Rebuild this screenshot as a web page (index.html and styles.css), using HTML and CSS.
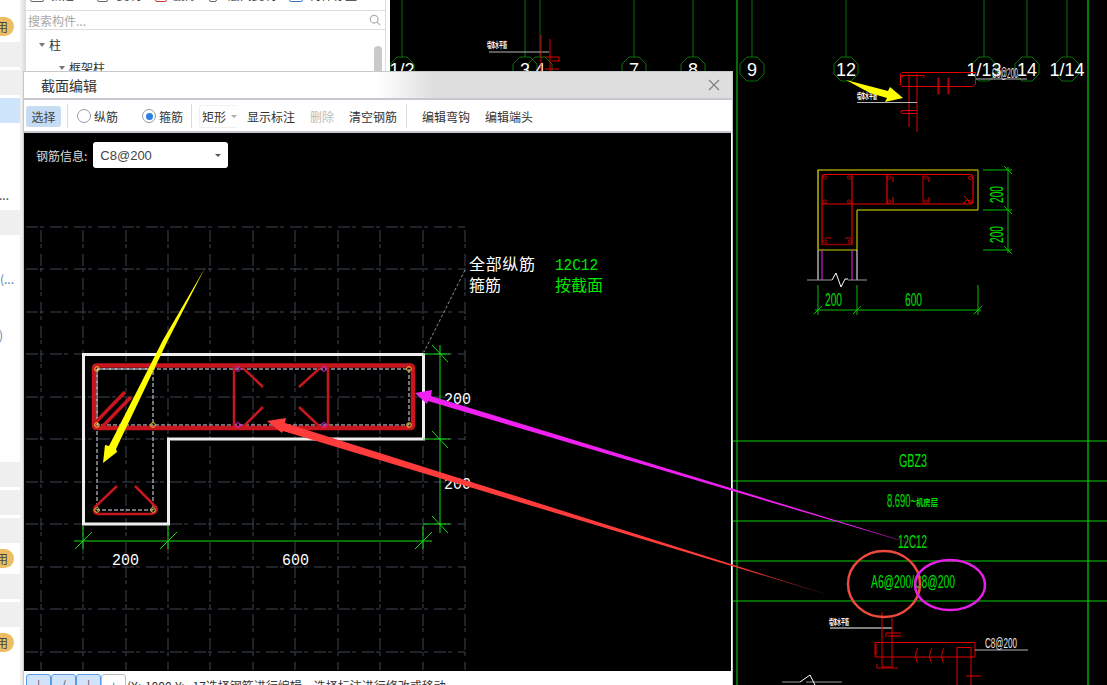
FILE: index.html
```html
<!DOCTYPE html>
<html lang="zh">
<head>
<meta charset="utf-8">
<title>截面编辑</title>
<link rel="stylesheet" href="styles.css">
</head>
<body>
<div class="app">
  <aside class="rail">
    <div class="row"><span class="badge">启用</span></div>
    <div class="row grey"></div>
    <div class="row grey"></div>
    <div class="row active"></div>
    <div class="row"></div>
    <div class="row"></div>
    <div class="row"><span class="cut">...</span></div>
    <div class="row grey"></div>
    <div class="row"></div>
    <div class="row"><span class="cut blue">(...</span></div>
    <div class="row"></div>
    <div class="row"><span class="cut blue far">)</span></div>
    <div class="row"></div>
    <div class="row"></div>
    <div class="row"></div>
    <div class="row"></div>
    <div class="row grey"></div>
    <div class="row grey"></div>
    <div class="row grey"></div>
    <div class="row"><span class="badge">启用</span></div>
    <div class="row grey"></div>
    <div class="row grey"></div>
    <div class="row"><span class="badge">启用</span></div>
    <div class="row"></div>
  </aside>
  <div class="gutter"></div>
  <section class="panel">
    <div class="ptools">
      <div class="ptools-row">
        <span class="pitem"><i class="picon"></i>新建</span>
        <span class="pitem"><i class="picon small"></i>复制</span>
        <span class="pitem"><i class="picon reddot"></i>删除</span>
        <span class="pitem"><i class="picon tiny"></i>层间复制</span>
        <span class="pitem"><i class="picon bluedot"></i>构件存盘</span>
      </div>
    </div>
    <div class="search">
      <span>搜索构件...</span>
      <svg class="mag" viewBox="0 0 14 14"><circle cx="6" cy="6" r="4.5"/><path d="M9.5 9.5L13 13"/></svg>
    </div>
    <div class="tree">
      <div class="node"><i class="tri"></i>柱</div>
      <div class="node sub"><i class="tri"></i>框架柱</div>
      <div class="thumb"></div>
    </div>
  </section>
  <div class="edge"></div>
  <main class="cad">
    <svg class="fill" viewBox="390 0 717 685">
      <defs><polygon id="oct" points="-5,-12 5,-12 12,-5 12,5 5,12 -5,12 -12,5 -12,-5"/></defs>
      <path class="axis" d="M402 0V57M525 0V57M540 0V57M634 0V57M693 0V57M752 0V57M846 0V57M984 0V57M1027 0V57M1067 0V57"/>
      <g class="axis">
        <use href="#oct" x="402" y="69"/><use href="#oct" x="525" y="69"/><use href="#oct" x="540" y="69"/>
        <use href="#oct" x="634" y="69"/><use href="#oct" x="693" y="69"/><use href="#oct" x="752" y="69"/>
        <use href="#oct" x="846" y="69"/><use href="#oct" x="984" y="69"/><use href="#oct" x="1027" y="69"/><use href="#oct" x="1067" y="69"/>
      </g>
      <g class="axis-label">
        <text x="402" y="76">1/2</text><text x="525" y="76">3</text><text x="540" y="76">4</text>
        <text x="634" y="76">7</text><text x="693" y="76">8</text><text x="752" y="76">9</text><text x="846" y="76">12</text>
        <text x="984" y="76">1/13</text><text x="1027" y="76">14</text><text x="1067" y="76">1/14</text>
      </g>
      <path class="frame-dark" d="M737 0V685"/>
      <path class="frame" d="M1088 0V685M733 441H1107M733 481H1107M733 521H1107M733 561H1107M733 601H1107"/>

      <text class="tiny" x="487" y="48" textLength="20" lengthAdjust="spacingAndGlyphs">墙体水平筋</text>
      <path class="grey-line" d="M489 52H549"/>
      <path class="red" d="M541 35V72M550 39V72M545 57H559V61H552M545 69H559"/>

      <path class="red" d="M902 72.500H975.500V84L973 86.500H902L900.500 85V74ZM909 74V127M917 74V132M902 78V75.500H924V78M902 112V110.500H916M902 110.500Q899 112 902 113.500H916M937 78Q939 78 939 81V91Q939 94 937 94M940 78Q938 78 938 81V91Q938 94 940 94M947 78Q949 78 949 81V91Q949 94 947 94M950 78Q948 78 948 81V91Q948 94 950 94"/>
      <path class="grey-line" d="M857 102.500H917M976 79H1027"/>
      <text class="tiny" x="857" y="99" textLength="20" lengthAdjust="spacingAndGlyphs">墙体水平筋</text>
      <text class="cadtext" x="992" y="78" textLength="26" lengthAdjust="spacingAndGlyphs">C8@200</text>

      <path class="yellow-line" d="M818 250V170H978"/>
      <path class="olive" d="M978 170V210M818 250H857"/>
      <path class="yellow-line thin" d="M978 210H857V250"/>
      <path class="red2" d="M825 174.500H970Q973 174.500 973 178V200Q973 204 970 204H822V178Q822 174.500 825 174.500ZM822 204V245M852 174V245M887 174V204"/>
      <path class="darkred" d="M923 174V204M822 244.500H852"/>
      <path class="red" d="M893 177V182M893 197V203M929 177V182M929 197V203M963 204L968 199M964 196L972 204M825 238H831M845 238H851"/>
      <g class="bars">
        <circle cx="825" cy="177.500" r="1.600"/><circle cx="849" cy="177.500" r="1.600"/><circle cx="889" cy="177.500" r="1.600"/><circle cx="926" cy="177.500" r="1.600"/><circle cx="970" cy="178" r="1.600"/>
        <circle cx="825" cy="201.500" r="1.600"/><circle cx="849" cy="201.500" r="1.600"/><circle cx="889" cy="201.500" r="1.600"/><circle cx="926" cy="201.500" r="1.600"/><circle cx="970" cy="201.500" r="1.600"/>
        <circle cx="825" cy="241.500" r="1.600"/><circle cx="850" cy="241.500" r="1.600"/>
      </g>
      <path class="white-line" d="M818 250V280M857 250V280"/>
      <path class="magenta" d="M822 250V280M852 250V280"/>
      <path class="break" d="M807 280H832M848 280H867"/>
      <path class="white-line" d="M832 280L836 273L841 287L845 279H848"/>
      <path class="dim" d="M983 170H1012M983 210H1012M983 250H1012M1008 167V253M1004 166L1012 174M1004 206L1012 214M1004 246L1012 254"/>
      <path class="dim" d="M818 285V315M857 285V315M978 285V315M815 310H981M814 314L822 306M853 314L861 306M974 314L982 306"/>
      <g class="cadgreen">
        <text x="825" y="306" textLength="17" lengthAdjust="spacingAndGlyphs">200</text>
        <text x="905" y="306" textLength="17" lengthAdjust="spacingAndGlyphs">600</text>
        <text transform="translate(1003 203) rotate(-90)" textLength="17" lengthAdjust="spacingAndGlyphs">200</text>
        <text transform="translate(1003 243) rotate(-90)" textLength="17" lengthAdjust="spacingAndGlyphs">200</text>
        <text x="899" y="467" textLength="28" lengthAdjust="spacingAndGlyphs">GBZ3</text>
        <text x="887" y="507" textLength="29" lengthAdjust="spacingAndGlyphs">8.690~</text>
        <text class="tinygreen" x="916" y="506" textLength="22" lengthAdjust="spacingAndGlyphs">机房层</text>
        <text x="898" y="548" textLength="29" lengthAdjust="spacingAndGlyphs">12C12</text>
        <text x="871" y="588" textLength="84" lengthAdjust="spacingAndGlyphs">A6@200/C8@200</text>
      </g>

      <text class="tiny" x="829" y="625" textLength="20" lengthAdjust="spacingAndGlyphs">墙体水平筋</text>
      <path class="white-line" d="M830 628H892"/>
      <path class="red" d="M882 612V667H892V618M875 642.500H975V657H875ZM957 685V647.500H971V685M876 644V655M886 633H901M886 633V637M888 636H901M877 668H898M877 668V664M918 648C915 652 915 660 918 663M932 648C929 652 929 660 932 663M944 648C941 652 941 660 944 663M966 676H981"/>
      <path class="grey-line" d="M975 650H1028"/>
      <text class="cadtext" x="985" y="648" textLength="32" lengthAdjust="spacingAndGlyphs">C8@200</text>
      <path class="break" d="M782 682H800M806 682H842"/>
      <path class="white-line" d="M800 682L810 675L815 685"/>
    </svg>
  </main>
</div>

<div class="dialog">
  <header class="titlebar">
    <span class="title">截面编辑</span>
    <svg class="close" viewBox="0 0 12 12"><path d="M1 1L11 11M11 1L1 11"/></svg>
  </header>
  <div class="toolbar">
    <button class="tool selected">选择</button>
    <span class="sep m6"></span>
    <label class="radio m9"><i class="dot"></i>纵筋</label>
    <label class="radio m24"><i class="dot on"></i>箍筋</label>
    <span class="sep m8"></span>
    <span class="combo m7">矩形<i class="caret"></i></span>
    <span class="tool-text m9">显示标注</span>
    <span class="tool-text m15 disabled">删除</span>
    <span class="tool-text m15">清空钢筋</span>
    <span class="sep m9"></span>
    <span class="tool-text m15">编辑弯钩</span>
    <span class="tool-text m15">编辑端头</span>
  </div>
  <div class="canvas">
    <div class="info">
      <span class="info-label">钢筋信息:</span>
      <span class="select">C8@200<i class="caret dark"></i></span>
    </div>
    <svg class="fill" viewBox="24 133 707 538">
      <path class="gridline" d="M26 227H465M26 269H465M26 312H465M26 354H465M26 397H465M26 439H465M26 482H465M26 524H465M26 567H465M26 609H465M26 652H465"/>
      <path class="gridline" d="M41 230V670M83 230V670M126 230V670M168 230V670M210 230V670M253 230V670M295 230V670M338 230V670M380 230V670M423 230V670M465 230V670"/>
      <path class="leader" d="M465 270L424 352"/>

      <path class="dashed" d="M97 369H409V425H97ZM97 425V510H153V369H97V425"/>
      <path class="concrete" d="M83.500 354.500H423.500V439H168.500V524H83.500Z"/>
      <path class="stirrup" d="M97 365.500H410Q413 365.500 413 369V425Q413 428 410 428H97Q94 428 94 425V369Q94 365.500 97 365.500Z"/>
      <path class="stirrup mid" d="M234 366V428M328 366V428"/>
      <path class="stirrup mid" d="M243 368L263 387M320 368L299 387M243 427L263 407M320 427L299 407M117 486L95 507Q92 513 98 514H152Q158 513 156 507L135 486"/>
      <path class="stirrup mid wide" d="M93 425L125 392M102 427L131 397"/>
      <g class="pin-y">
        <circle cx="97" cy="369" r="2.300"/><circle cx="409" cy="369" r="2.300"/><circle cx="97" cy="425" r="2.300"/><circle cx="153" cy="425" r="2.300"/><circle cx="409" cy="425" r="2.300"/><circle cx="97" cy="510" r="2.300"/><circle cx="153" cy="510" r="2.300"/>
      </g>
      <g class="pin-m">
        <circle cx="238" cy="369" r="2.300"/><circle cx="324" cy="369" r="2.300"/><circle cx="238" cy="425" r="2.300"/><circle cx="324" cy="425" r="2.300"/>
      </g>
      <path class="dim2" d="M440 345V533M423 354H450M423 439H450M423 524H450M432 345L448 362M432 431L448 448M432 516L448 533"/>
      <path class="dim2" d="M83 526V549M168 526V549M423 526V549M74 541H432M75 549L92 532M160 549L177 532M415 549L432 532"/>
      <g class="cadwhite">
        <text x="112" y="565" textLength="27" lengthAdjust="spacingAndGlyphs">200</text>
        <text x="282" y="565" textLength="27" lengthAdjust="spacingAndGlyphs">600</text>
        <text x="444" y="404" textLength="27" lengthAdjust="spacingAndGlyphs">200</text>
        <text x="444" y="489" textLength="27" lengthAdjust="spacingAndGlyphs">200</text>
      </g>
      <g class="legend">
        <text x="469" y="270" textLength="66" lengthAdjust="spacing">全部纵筋</text>
        <text x="469" y="291">箍筋</text>
        <text class="g mono" x="555" y="270" textLength="43" lengthAdjust="spacingAndGlyphs">12C12</text>
        <text class="g" x="555" y="291">按截面</text>
      </g>
      <polygon class="arrow-y" points="205,268 168,340 116,449 117,452 103,463 105,445 109,446 163,340"/>
    </svg>
  </div>
  <footer class="statusbar">
    <div class="tabs">
      <span class="tab on">|</span><span class="tab on">/</span><span class="tab on">|</span><span class="tab">+</span>
    </div>
    <span class="status">(X: 1000 Y: -17选择钢筋进行编辑，选择标注进行修改或移动</span>
  </footer>
</div>

<svg class="overlay" viewBox="0 0 1107 685">
  <defs>
    <linearGradient id="fadeR" gradientUnits="userSpaceOnUse" x1="267" y1="421" x2="835" y2="597">
      <stop offset="0.8" stop-color="#ff3b3b"/><stop offset="1" stop-color="#7a1a1a"/>
    </linearGradient>
    <linearGradient id="fadeM" gradientUnits="userSpaceOnUse" x1="415" y1="393" x2="939" y2="552">
      <stop offset="0.85" stop-color="#f021f0"/><stop offset="1" stop-color="#6a106a"/>
    </linearGradient>
  </defs>
  <polygon fill="url(#fadeR)" points="267,421 286,418 285,423 835,597 283,431 282,433"/>
  <polygon fill="url(#fadeM)" points="415,393 432,390 431,396 939,552 428,401 427,404"/>
  <polygon class="arrow-y" points="846,80 888,91 890,87 903,98 885,102 887,98 870,93"/>
  <ellipse class="ring-r" cx="884" cy="584" rx="36" ry="33"/>
  <ellipse class="ring-m" cx="950" cy="585" rx="35" ry="25"/>
</svg>
</body>
</html>
```

FILE: styles.css
```css
* { box-sizing: border-box; }
html, body { margin: 0; padding: 0; }
body {
  position: relative;
  width: 1107px;
  height: 685px;
  overflow: hidden;
  background: #000;
  font-family: "Noto Sans CJK SC", "Liberation Sans", sans-serif;
  font-size: 12px;
  color: #333;
}
i { font-style: normal; display: inline-block; }

.app { display: flex; height: 685px; }

/* left rail */
.rail { width: 20px; padding-top: 11px; background: #fff; overflow: hidden; flex: none; }
.row {
  display: flex;
  justify-content: flex-end;
  align-items: center;
  height: 28px;
  padding-right: 6px;
  border-top: 3px solid #fff;
  background: #fff;
  white-space: nowrap;
}
.row.grey { background: #efefef; }
.row.active { background: #cfe5fb; }
.badge {
  flex: none;
  height: 19px;
  padding: 0 6px 0 8px;
  border-radius: 10px;
  background: #edbd62;
  line-height: 19px;
  color: #444;
}
.cut { flex: none; color: #444; margin-right: 5px; }
.cut.blue { color: #4a7fb0; margin-right: 0; }
.cut.far { margin-right: 11px; }

.gutter { width: 5px; flex: none; background: linear-gradient(90deg, #f4f4f4, #dcdcdc); }

/* component panel */
.panel { width: 361px; flex: none; background: #fff; border-left: 1px solid #ddd; border-right: 1px solid #ddd; }
.ptools { height: 11px; overflow: hidden; border-bottom: 1px solid #ddd; }
.ptools-row {
  display: grid;
  grid-template-columns: 67px 58px 54px 80px 86px;
  margin: -13px 0 0 4px;
  height: 16px;
  line-height: 16px;
  font-size: 12px;
}
.pitem { display: flex; align-items: center; gap: 6px; white-space: nowrap; }
.picon { width: 14px; height: 14px; border: 1px solid #666; border-radius: 2px; flex: none; }
.picon.small { width: 11px; margin-right: 3px; }
.picon.reddot { width: 12px; border-color: #d33; }
.picon.tiny { width: 8px; margin-right: 5px; }
.picon.bluedot { width: 14px; border-color: #3a78c8; }

.search {
  display: flex;
  align-items: center;
  justify-content: space-between;
  height: 19px;
  padding: 0 4px 0 2px;
  border-bottom: 1px solid #ddd;
  color: #a8a8a8;
  font-size: 12px;
}
.mag { width: 12px; height: 12px; fill: none; stroke: #b0b0b0; stroke-width: 1.5; }
.mag path { stroke: #b0b0b0; }

.tree { position: relative; height: 655px; background: #fff; color: #333; padding-top: 3px; }
.node { display: flex; align-items: center; height: 23px; padding-left: 13px; gap: 3px; }
.node.sub { padding-left: 33px; }
.tri { width: 0; height: 0; margin-right: 1px; border: 3.5px solid transparent; border-top: 4px solid #777; border-bottom: 0; }
.thumb { position: absolute; top: 16px; right: 3px; width: 8px; height: 60px; border-radius: 4px; background: #c9c9c9; }

.edge { width: 4px; flex: none; background: #fff; }

.cad { flex: 1; min-width: 0; height: 685px; }
.fill { display: block; width: 100%; height: 100%; }

/* CAD strokes */
svg path, svg use { fill: none; }
.axis { stroke: #0a6e0a; stroke-width: 1; fill: none; }
.axis use { stroke: #0a6e0a; }
.axis-label text { fill: #fff; font: 18px "Liberation Sans", sans-serif; text-anchor: middle; }
.frame { stroke: #00d400; stroke-width: 1.2; }
.frame-dark { stroke: #078c07; stroke-width: 1.5; }
.red { stroke: #e00000; stroke-width: 1; }
.red2 { stroke: #ee0000; stroke-width: 1.2; }
.darkred { stroke: #8e0000; stroke-width: 1.5; }
.grey-line { stroke: #b5b5b5; stroke-width: 1; }
.white-line { stroke: #fff; stroke-width: 1; }
.magenta { stroke: #f020f0; stroke-width: 1; }
.break { stroke: #9a9a9a; stroke-width: 1.2; }
.yellow-line { stroke: #e6e600; stroke-width: 1.2; }
.yellow-line.thin { stroke-width: 1; }
.olive { stroke: #8a8a00; stroke-width: 1.5; }
.dim { stroke: #00c000; stroke-width: 1; }
.bars { fill: none; stroke: #e00000; stroke-width: 0.8; }
.tiny { fill: #fff; font: 700 8px "Noto Sans CJK SC", sans-serif; }
.cadtext { fill: #e8e8e8; font: 15px "Liberation Sans", sans-serif; }
.cadgreen text { fill: #00e000; font: 18px "Liberation Sans", sans-serif; }
.cadgreen text.tinygreen { font: 700 9px "Noto Sans CJK SC", sans-serif; }

/* dialog window */
.dialog {
  position: absolute;
  left: 23px;
  top: 71px;
  width: 710px;
  height: 614px;
  display: flex;
  flex-direction: column;
  border: 1px solid #c5c8cc;
  border-bottom: 0;
  background: #fff;
}
.titlebar {
  display: flex;
  align-items: center;
  justify-content: space-between;
  flex: none;
  height: 28px;
  padding: 0 12px 0 17px;
  border-bottom: 2px solid #c5c8cc;
  background: linear-gradient(90deg, #fff 50%, #dedede 58%);
}
.title { font-size: 14px; color: #333; }
.close { width: 12px; height: 12px; stroke: #808080; stroke-width: 1.2; }

.toolbar {
  display: flex;
  align-items: center;
  flex: none;
  height: 33px;
  padding: 1px 0 0 2px;
  margin-right: 1px;
  border-bottom: 2px solid #c5c8cc;
  background: #fff;
  white-space: nowrap;
}
.m6 { margin-left: 6px; }
.m7 { margin-left: 7px; }
.m8 { margin-left: 8px; }
.m9 { margin-left: 9px; }
.m14 { margin-left: 14px; }
.m15 { margin-left: 15px; }
.m24 { margin-left: 24px; }
.tool {
  width: 35px;
  height: 21px;
  padding: 0;
  border: 0;
  border-radius: 3px;
  background: #c5dcf2;
  color: #444;
  font: inherit;
}
.sep { width: 1px; height: 24px; background: #dcdcdc; flex: none; }
.radio { display: flex; align-items: center; gap: 3px; color: #333; }
.dot { position: relative; width: 14px; height: 14px; border: 1px solid #999; border-radius: 50%; background: #fff; }
.dot.on::after {
  content: "";
  position: absolute;
  left: 2.500px;
  top: 2.500px;
  width: 7px;
  height: 7px;
  border-radius: 50%;
  background: #2d7fe6;
}
.combo { display: flex; align-items: center; width: 39px; height: 23px; padding-left: 2px; border: 1px solid #f0f0f0; border-right: 0; border-radius: 3px; color: #333; gap: 5px; }
.caret { width: 0; height: 0; border: 3px solid transparent; border-top: 3px solid #aaa; border-bottom: 0; }
.caret.dark { border-top-color: #555; }
.tool-text { color: #333; }
.disabled { color: #bbb; }

.canvas { position: relative; flex: 1; min-height: 0; background: #000; margin-right: 1px; }
.info { position: absolute; left: 12px; top: 9px; display: flex; align-items: center; gap: 6px; }
.info-label { color: #ddd; }
.select {
  display: flex;
  align-items: center;
  justify-content: space-between;
  width: 135px;
  height: 26px;
  padding: 0 7px;
  border-radius: 3px;
  background: #fff;
  color: #444;
  font: 13px "Liberation Sans", sans-serif;
}

.gridline { stroke: #3d4552; stroke-width: 1; stroke-dasharray: 12 2 4 6; }
.leader { stroke: #8a8a8a; stroke-width: 1; stroke-dasharray: 3 2; }
.dashed { stroke: #dfe8f5; stroke-width: 1; stroke-dasharray: 4 2; }
.concrete { stroke: #eeeeee; stroke-width: 3; }
.stirrup { stroke: #c8161f; stroke-width: 4.500; }
.stirrup.mid { stroke-width: 2.500; }
.stirrup.wide { stroke-width: 3.500; }
.pin-y { fill: none; stroke: #e8c832; stroke-width: 1; }
.pin-m { fill: none; stroke: #e020e0; stroke-width: 1; }
.dim2 { stroke: #12e012; stroke-width: 1; }
.cadwhite text { fill: #fff; font: 16px "Liberation Mono", monospace; }
.legend text { fill: #fff; font: 16px "Noto Sans CJK SC", sans-serif; }
.legend text.g { fill: #00e800; }
.legend text.mono { font: 16px "Liberation Mono", monospace; }
.arrow-y { fill: #ffff00; }

.statusbar { display: flex; align-items: flex-start; flex: none; height: 14px; overflow: hidden; background: #fff; padding: 3px 0 0 2px; }
.tabs { display: flex; flex: none; }
.tab {
  width: 25px;
  height: 22px;
  text-align: center;
  border: 1px solid #bbb;
  border-radius: 3px 3px 0 0;
  color: #2d7fe6;
  line-height: 20px;
}
.tab.on { background: #d2e4fb; border-color: #5a9be8; color: #555; }
.status { margin: 3px 0 0 1px; color: #333; line-height: 18px; white-space: nowrap; word-spacing: 1px; }

/* annotations drawn on top of every window */
.overlay { position: absolute; left: 0; top: 0; width: 1107px; height: 685px; pointer-events: none; }
.ring-r { fill: none; stroke: #f04a3c; stroke-width: 2.500; }
.ring-m { fill: none; stroke: #e61fe6; stroke-width: 2.500; }
```
